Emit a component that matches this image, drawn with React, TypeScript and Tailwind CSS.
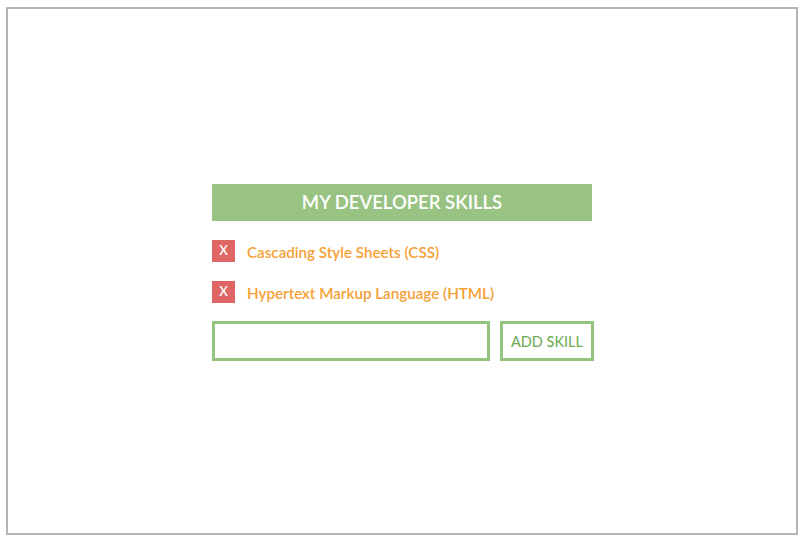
import { useState } from 'react'

const initialSkills = ['Cascading Style Sheets (CSS)', 'Hypertext Markup Language (HTML)']

export default function App() {
  const [skills, setSkills] = useState(initialSkills)
  const [value, setValue] = useState('')

  const addSkill = () => {
    if (!value.trim()) return
    setSkills([...skills, value.trim()])
    setValue('')
  }

  return (
    <div className="w-[804px] h-[542px] bg-white pl-[6px] pt-[7px]" style={{ fontFamily: '"Source Sans Pro", Lato, "Liberation Sans", sans-serif' }}>
      <div className="w-[792px] h-[528px] border-2 border-[#b4b4b4] flex justify-center pt-[175px]">
        <div className="w-[380px]">
          {/* Header */}
          <div className="w-[380px] h-[37px] bg-[#98c383] flex items-center justify-center text-white text-[18.5px] font-semibold">
            MY DEVELOPER SKILLS
          </div>

          {/* Skill list */}
          <ul className="mt-[19px] flex flex-col gap-[19px]">
            {skills.map((skill, i) => (
              <li key={i} className="flex items-center h-[22px]">
                <button
                  onClick={() => setSkills(skills.filter((_, j) => j !== i))}
                  className="w-[23px] h-[22px] bg-[#e06666] text-white text-[13px] font-semibold flex items-center justify-center"
                >
                  X
                </button>
                <span className="ml-[12px] pt-[3px] text-[#f6a035] text-[15.2px] font-semibold">{skill}</span>
              </li>
            ))}
          </ul>

          {/* Add form */}
          <div className="mt-[18px] flex gap-[10px] w-[382px]">
            <input
              value={value}
              onChange={(e) => setValue(e.target.value)}
              className="w-[278px] h-[40px] border-[3px] border-[#93c47d] outline-none px-2"
            />
            <button
              onClick={addSkill}
              className="w-[94px] h-[40px] pt-[2px] border-[3px] border-[#93c47d] text-[#6aa84f] text-[14.5px] font-normal"
            >
              ADD SKILL
            </button>
          </div>
        </div>
      </div>
    </div>
  )
}
